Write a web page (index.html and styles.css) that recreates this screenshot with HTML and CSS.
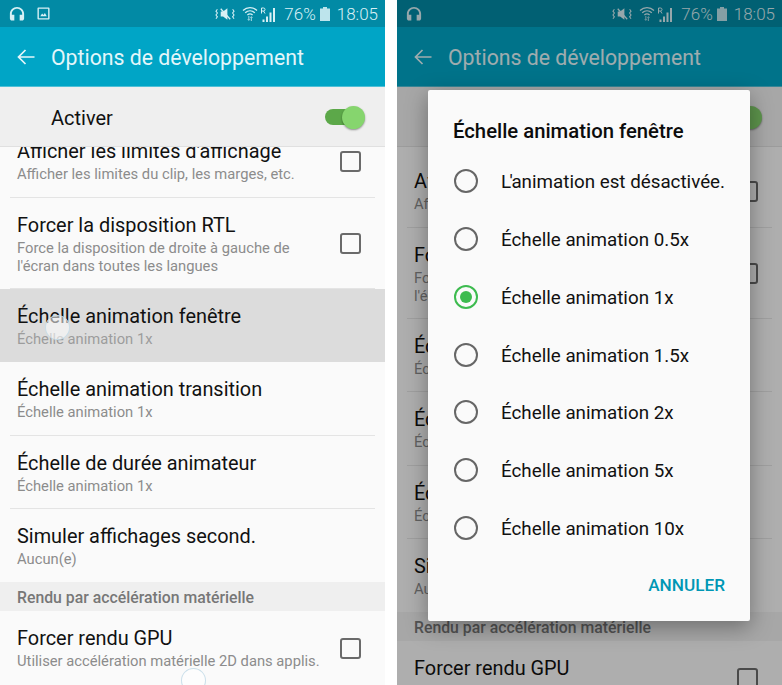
FILE: index.html
```html
<!DOCTYPE html>
<html lang="fr">
<head>
<meta charset="utf-8">
<title>Options de développement</title>
<link rel="stylesheet" href="styles.css">
</head>
<body>
<svg class="defs" width="0" height="0" aria-hidden="true">
  <symbol id="i-head" viewBox="0 0 18 18"><path fill="currentColor" d="M9 1C4.600 1 1 4.400 1 8.800V14c0 1.300 1 2.400 2.300 2.400H6V9.800H3.200V8.800C3.200 5.600 5.800 3.200 9 3.200s5.800 2.400 5.800 5.600v1h-2.800v6.600h2.700c1.300 0 2.300-1.100 2.300-2.400V8.800C17 4.400 13.400 1 9 1z"/></symbol>
  <symbol id="i-pic" viewBox="0 0 14 14"><path fill="currentColor" fill-rule="evenodd" d="M1.500 0.500h11a1 1 0 0 1 1 1v11a1 1 0 0 1-1 1h-11a1 1 0 0 1-1-1v-11a1 1 0 0 1 1-1zM2 2v10h10V2zM3.500 10l2-3 1.500 1.500L8.500 6.500 10.500 10z"/></symbol>
  <symbol id="i-mute" viewBox="0 0 21 14">
    <path fill="currentColor" d="M6 4.500h2.500L13 1v12L8.500 9.500H6z"/>
    <path fill="none" stroke="currentColor" stroke-width="1.100" d="M2.500 2 1 4l1.500 2L1 8l1.500 2L1 12M18.500 2 20 4l-1.500 2L20 8l-1.500 2L20 12"/>
    <path stroke="currentColor" stroke-width="1.300" d="M6 1.500 16 12.500"/>
  </symbol>
  <symbol id="i-wifi" viewBox="0 0 16 15">
    <path fill="none" stroke="currentColor" stroke-width="1.300" d="M1 4.500C5 .7 11 .7 15 4.500M3.200 6.800C6 4.200 10 4.200 12.800 6.800M5.400 9C7 7.600 9 7.600 10.600 9"/>
    <path fill="currentColor" opacity=".65" d="M6.200 10h1.200v3h1l-1.600 2-1.600-2h1zM8.800 15v-3h-1l1.600-2 1.600 2h-1v3z"/>
  </symbol>
  <symbol id="i-signal" viewBox="0 0 16 15">
    <path fill="currentColor" d="M2.500 15h2v-2.500h-2zM6 15h2V9.500H6zM9.500 15h2V5.500h-2zM13 15h2V1h-2z"/>
    <path fill="none" stroke="currentColor" stroke-width="1" d="M1.500 6.500V1h2a1.400 1.400 0 0 1 0 3h-2M3.500 4 5 6.500"/>
  </symbol>
  <symbol id="i-bat" viewBox="0 0 10 14"><path fill="currentColor" d="M3 0h4v1.500h3V14H0V1.500h3z"/></symbol>
  <symbol id="i-back" viewBox="0 0 18 16"><path fill="none" stroke="currentColor" stroke-width="1.700" d="M17.500 8H1.500M8.500 1 1.500 8l7 7"/></symbol>
</svg>

<main class="phone phone-a">
  <header class="status">
    <svg class="ico ico-head"><use href="#i-head"/></svg>
    <svg class="ico ico-pic"><use href="#i-pic"/></svg>
    <div class="status-right">
      <svg class="ico ico-mute"><use href="#i-mute"/></svg>
      <svg class="ico ico-wifi"><use href="#i-wifi"/></svg>
      <svg class="ico ico-signal"><use href="#i-signal"/></svg>
      <span class="pct">76%</span>
      <svg class="ico ico-bat"><use href="#i-bat"/></svg>
      <span class="time">18:05</span>
    </div>
  </header>
  <div class="toolbar">
    <svg class="ico ico-back"><use href="#i-back"/></svg>
    <h1 class="toolbar-title">Options de développement</h1>
  </div>
  <div class="master">
    <span class="master-label">Activer</span>
    <span class="switch"><span class="switch-thumb"></span></span>
  </div>
  <div class="list">
    <div class="list-inner">
      <div class="row"><div class="row-body"><div class="row-text"><div class="row-title">Afficher les limites d'affichage</div><div class="row-sub">Afficher les limites du clip, les marges, etc.</div></div><span class="check"></span></div></div>
      <div class="row"><div class="row-body"><div class="row-text"><div class="row-title">Forcer la disposition RTL</div><div class="row-sub">Force la disposition de droite à gauche de<br>l'écran dans toutes les langues</div></div><span class="check"></span></div></div>
      <div class="row row-active"><div class="row-body"><div class="row-text"><div class="row-title">Échelle animation fenêtre</div><div class="row-sub">Échelle animation 1x</div></div></div></div>
      <div class="row"><div class="row-body"><div class="row-text"><div class="row-title">Échelle animation transition</div><div class="row-sub">Échelle animation 1x</div></div></div></div>
      <div class="row"><div class="row-body"><div class="row-text"><div class="row-title">Échelle de durée animateur</div><div class="row-sub">Échelle animation 1x</div></div></div></div>
      <div class="row row-last"><div class="row-body"><div class="row-text"><div class="row-title">Simuler affichages second.</div><div class="row-sub">Aucun(e)</div></div></div></div>
      <div class="section">Rendu par accélération matérielle</div>
      <div class="row row-last"><div class="row-body"><div class="row-text"><div class="row-title">Forcer rendu GPU</div><div class="row-sub">Utiliser accélération matérielle 2D dans applis.</div></div><span class="check"></span></div></div>
    </div>
  </div>
  <span class="touch touch-1"></span>
  <span class="touch touch-2"></span>
</main>

<section class="phone phone-b">
  <header class="status">
    <svg class="ico ico-head"><use href="#i-head"/></svg>
    <div class="status-right">
      <svg class="ico ico-mute"><use href="#i-mute"/></svg>
      <svg class="ico ico-wifi"><use href="#i-wifi"/></svg>
      <svg class="ico ico-signal"><use href="#i-signal"/></svg>
      <span class="pct">76%</span>
      <svg class="ico ico-bat"><use href="#i-bat"/></svg>
      <span class="time">18:05</span>
    </div>
  </header>
  <div class="toolbar">
    <svg class="ico ico-back"><use href="#i-back"/></svg>
    <h2 class="toolbar-title">Options de développement</h2>
  </div>
  <div class="master">
    <span class="master-label">Activer</span>
    <span class="switch"><span class="switch-thumb"></span></span>
  </div>
  <div class="list">
    <div class="list-inner">
      <div class="row"><div class="row-body"><div class="row-text"><div class="row-title">Afficher les limites d'affichage</div><div class="row-sub">Afficher les limites du clip, les marges, etc.</div></div><span class="check"></span></div></div>
      <div class="row"><div class="row-body"><div class="row-text"><div class="row-title">Forcer la disposition RTL</div><div class="row-sub">Force la disposition de droite à gauche de<br>l'écran dans toutes les langues</div></div><span class="check"></span></div></div>
      <div class="row"><div class="row-body"><div class="row-text"><div class="row-title">Échelle animation fenêtre</div><div class="row-sub">Échelle animation 1x</div></div></div></div>
      <div class="row"><div class="row-body"><div class="row-text"><div class="row-title">Échelle animation transition</div><div class="row-sub">Échelle animation 1x</div></div></div></div>
      <div class="row"><div class="row-body"><div class="row-text"><div class="row-title">Échelle de durée animateur</div><div class="row-sub">Échelle animation 1x</div></div></div></div>
      <div class="row row-last"><div class="row-body"><div class="row-text"><div class="row-title">Simuler affichages second.</div><div class="row-sub">Aucun(e)</div></div></div></div>
      <div class="section">Rendu par accélération matérielle</div>
      <div class="row row-last"><div class="row-body"><div class="row-text"><div class="row-title">Forcer rendu GPU</div><div class="row-sub">Utiliser accélération matérielle 2D dans applis.</div></div><span class="check"></span></div></div>
    </div>
  </div>
  <div class="scrim">
    <div class="dialog">
      <div class="dialog-title">Échelle animation fenêtre</div>
      <div class="options">
        <div class="option"><span class="radio"></span><span><span class="tight">L'</span>animation est désactivée.</span></div>
        <div class="option"><span class="radio"></span>Échelle animation 0.5x</div>
        <div class="option"><span class="radio radio-on"></span>Échelle animation 1x</div>
        <div class="option"><span class="radio"></span>Échelle animation 1.5x</div>
        <div class="option"><span class="radio"></span>Échelle animation 2x</div>
        <div class="option"><span class="radio"></span>Échelle animation 5x</div>
        <div class="option"><span class="radio"></span>Échelle animation 10x</div>
      </div>
      <div class="dialog-actions"><span class="cancel">ANNULER</span></div>
    </div>
  </div>
</section>
</body>
</html>
```
FILE: styles.css
```css
* { box-sizing: border-box; }
html, body { margin: 0; padding: 0; }
body {
  width: 782px;
  height: 685px;
  overflow: hidden;
  background: #fff;
  display: flex;
  gap: 12px;
  font-family: Roboto, "Liberation Sans", sans-serif;
}
.defs { position: absolute; }
.phone {
  position: relative;
  width: 385px;
  height: 685px;
  overflow: hidden;
  display: flex;
  flex-direction: column;
  background: #fafafa;
}
.ico { display: block; flex: none; }

.status {
  height: 27px;
  flex: none;
  background: #028aa5;
  color: #d8f0f5;
  display: flex;
  align-items: center;
  padding: 0 7px 0 9px;
}
.ico-head { width: 16px; height: 16px; margin-top: 1px; }
.ico-pic { width: 13px; height: 13px; margin-left: 12px; }
.status-right { margin-left: auto; display: flex; align-items: center; }
.ico-mute { width: 20px; height: 14px; }
.ico-wifi { width: 16px; height: 15px; margin-left: 7px; }
.ico-signal { width: 16px; height: 15px; margin-left: 2px; margin-top: 2px; }
.pct { font-size: 17px; font-weight: 300; margin-left: 8px; line-height: 27px; padding-top: 2px; }
.ico-bat { width: 10px; height: 14px; margin-left: 4px; color: #bde4ec; }
.time { font-size: 17px; font-weight: 300; margin-left: 7px; line-height: 27px; padding-top: 2px; }

.toolbar {
  height: 60px;
  flex: none;
  background: #00a5c6;
  border-bottom: 1px solid #4fc0d7;
  color: #e3f6fa;
  display: flex;
  align-items: center;
  padding: 1px 0 0 17px;
}
.ico-back { width: 18px; height: 16px; }
.toolbar-title {
  margin: 0 0 0 16px;
  padding-top: 2px;
  font-size: 21.250px;
  font-weight: 400;
  line-height: 28px;
}

.master {
  height: 60px;
  flex: none;
  background: #efefef;
  border-bottom: 1px solid #e0e0e0;
  display: flex;
  align-items: center;
  position: relative;
  z-index: 1;
  padding: 1px 20px 0 51px;
}
.master-label { font-size: 20px; color: #111; padding-top: 2px; }
.switch {
  margin-left: auto;
  width: 28px;
  height: 16px;
  border-radius: 8px;
  background: #5ca849;
  position: relative;
  margin-right: 12px;
}
.switch-thumb {
  position: absolute;
  right: -12px;
  top: -3px;
  width: 23px;
  height: 23px;
  border-radius: 50%;
  background: #86d56e;
  box-shadow: 0 1px 2px rgba(0, 0, 0, .4);
}

.list { flex: 1; min-height: 0; overflow: hidden; }
.list-inner { margin-top: -22.800px; }
.phone-b .list-inner { margin-top: 7.200px; }

.row { padding: 0 10px; }
.row-body {
  padding: 16px 14px 13.400px 7px;
  border-bottom: 1px solid #e4e4e4;
  display: flex;
  align-items: center;
}
.row-text { flex: 1; min-width: 0; }
.row-title { font-size: 19.900px; line-height: 24px; color: #111; white-space: nowrap; }
.row-sub { font-size: 14.750px; line-height: 18px; margin-top: 1px; color: #8c8c8c; white-space: nowrap; }
.row-active { background: #dcdcdc; }
.row-active .row-body { border-bottom-color: transparent; }
.row-active .row-sub { color: #9c9c9c; }
.row-last .row-body { border-bottom: 0; }

.check {
  flex: none;
  width: 21px;
  height: 21px;
  border: 2px solid #6a6a6a;
  border-radius: 3px;
  margin-top: -1px;
}

.section {
  height: 29.600px;
  background: #efefef;
  padding: 1px 0 0 17px;
  font-size: 15.800px;
  font-weight: 500;
  line-height: 30px;
  color: #777;
}

.touch {
  position: absolute;
  width: 25px;
  height: 25px;
  border-radius: 50%;
  background: rgba(255, 255, 255, .55);
  border: 1.500px solid rgba(196, 220, 232, .9);
}
.touch-1 { left: 45px; top: 315px; }
.touch-2 { left: 181px; top: 668px; }

.scrim {
  position: absolute;
  inset: 0;
  z-index: 2;
  background: rgba(0, 0, 0, .3);
  padding: 90px 32px 0 31px;
}
.dialog {
  height: 531px;
  background: #fafafa;
  border-radius: 2px;
  box-shadow: 0 6px 22px rgba(0, 0, 0, .35);
  padding: 27px 25px 0 26px;
}
.dialog-title {
  margin-left: -1px;
  font-size: 20.300px;
  font-weight: 500;
  line-height: 28px;
  color: #0c0c0c;
}
.options { margin-top: 7.300px; }
.option {
  height: 57.800px;
  display: flex;
  align-items: center;
  padding-top: 2px;
  font-size: 18.800px;
  color: #111;
  white-space: nowrap;
}
.tight { letter-spacing: -1.500px; }
.radio {
  flex: none;
  width: 24px;
  height: 24px;
  border-radius: 50%;
  border: 2px solid #666;
  margin: -2px 23px 0 0;
  display: flex;
  align-items: center;
  justify-content: center;
}
.radio-on { border-color: #3dbb4f; }
.radio-on::after {
  content: "";
  width: 12px;
  height: 12px;
  border-radius: 50%;
  background: #3dbb4f;
}
.dialog-actions { display: flex; justify-content: flex-end; margin-top: 16px; }
.cancel {
  font-size: 17.200px;
  font-weight: 500;
  line-height: 24px;
  color: #0097b5;
}
```
